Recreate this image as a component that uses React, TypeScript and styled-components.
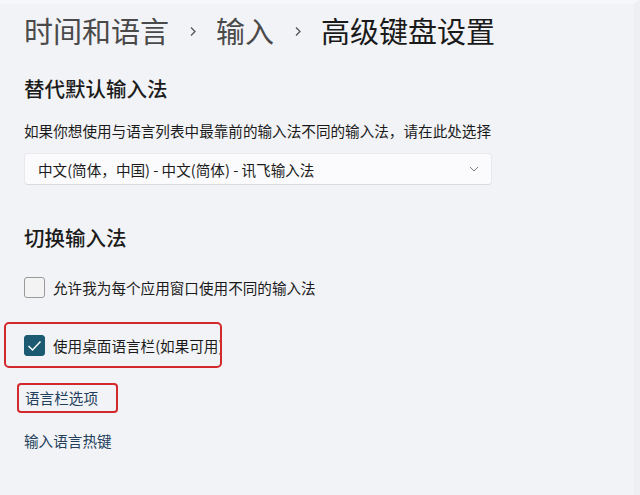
import React from "react";
import styled, { createGlobalStyle } from "styled-components";

const GlobalStyle = createGlobalStyle`
  html, body {
    margin: 0;
    padding: 0;
    background: #f2f3f6;
  }
  body {
    font-family: "Noto Sans CJK SC", "Noto Sans", sans-serif;
    color: #1b1b1b;
  }
  #root {
    min-height: 495px;
  }
`;

const Page = styled.div`
  box-sizing: border-box;
  width: 640px;
  height: 495px;
  padding: 13px 0 0 24px;
  background: #f2f3f6;
  border-top: 4px solid #f7f7f9;
  border-right: 6px solid #eeeff2;
  display: flex;
  flex-direction: column;
`;

const Breadcrumb = styled.h1`
  margin: -7px 0 0 0;
  display: flex;
  align-items: center;
  font-size: 29px;
  line-height: 40px;
  font-weight: 400;
  white-space: nowrap;
`;

const Crumb = styled.span<{ $current?: boolean }>`
  color: ${(p) => (p.$current ? "#1a1a1a" : "#4a4a4a")};
`;

const Sep = styled.span`
  display: inline-flex;
  align-items: center;
  margin: 2px 19px 0 20px;
  color: #5a5a5a;
`;

const SectionTitle = styled.h2<{ $top: number }>`
  margin: ${(p) => p.$top}px 0 0 0;
  font-size: 20.5px;
  line-height: 28px;
  font-weight: 500;
  color: #1b1b1b;
`;

const Description = styled.p`
  margin: 19px 0 0 0;
  font-size: 14.6px;
  line-height: 20px;
  color: #1b1b1b;
  white-space: nowrap;
`;

const Select = styled.div`
  box-sizing: border-box;
  margin-top: 12px;
  width: 468px;
  height: 32px;
  display: flex;
  align-items: center;
  justify-content: space-between;
  padding: 0 12px 0 13px;
  background: #fbfbfd;
  border: 1px solid #e8e9ec;
  border-bottom-color: #d9dadd;
  border-radius: 4px;
  font-size: 14.6px;
  color: #1b1b1b;
  white-space: nowrap;
`;

const CheckRow = styled.label<{ $top: number; $highlight?: boolean }>`
  box-sizing: border-box;
  margin-top: ${(p) => p.$top}px;
  display: flex;
  align-items: center;
  gap: 8px;
  font-size: 14.6px;
  line-height: 20px;
  color: #1b1b1b;
  white-space: nowrap;
  overflow: hidden;
  ${(p) =>
    p.$highlight
      ? `
    margin-left: -20px;
    width: 218px;
    height: 46px;
    padding: 1px 0 0 18px;
    border: 2.5px solid #d3292c;
    border-radius: 5px;
  `
      : ""}
`;

const Box = styled.span<{ $checked?: boolean }>`
  box-sizing: border-box;
  flex: none;
  width: 21px;
  height: 21px;
  border-radius: 3px;
  display: inline-flex;
  align-items: center;
  justify-content: center;
  background: ${(p) => (p.$checked ? "#1c5a72" : "#f3f3f4")};
  border: 1px solid ${(p) => (p.$checked ? "#1c5a72" : "#9a9a9a")};
`;

const Link = styled.a<{ $top: number; $highlight?: boolean }>`
  box-sizing: border-box;
  margin-top: ${(p) => p.$top}px;
  align-self: flex-start;
  display: flex;
  align-items: center;
  font-size: 14.6px;
  line-height: 20px;
  color: #243f5c;
  text-decoration: none;
  white-space: nowrap;
  ${(p) =>
    p.$highlight
      ? `
    margin-left: -7px;
    width: 101px;
    height: 30px;
    padding: 0 0 0 6px;
    border: 2.5px solid #d3292c;
    border-radius: 4px;
  `
      : ""}
`;

const Chevron = () => (
  <svg width="10" height="6" viewBox="0 0 10 6">
    <path d="M1 1 L5 5 L9 1" fill="none" stroke="#7a7a7a" strokeWidth="1" />
  </svg>
);

const SepIcon = () => (
  <svg width="8" height="11" viewBox="0 0 8 11">
    <path d="M2 1.5 L6 5.5 L2 9.5" fill="none" stroke="#555" strokeWidth="1.3" />
  </svg>
);

const CheckMark = () => (
  <svg width="15" height="12" viewBox="0 0 15 12">
    <path d="M1.5 6 L5.5 10 L13.5 1.5" fill="none" stroke="#ffffff" strokeWidth="1.4" />
  </svg>
);

export default function App() {
  return (
    <>
      <GlobalStyle />
      <Page>
        <Breadcrumb>
          <Crumb>时间和语言</Crumb>
          <Sep>
            <SepIcon />
          </Sep>
          <Crumb>输入</Crumb>
          <Sep>
            <SepIcon />
          </Sep>
          <Crumb $current>高级键盘设置</Crumb>
        </Breadcrumb>

        <SectionTitle $top={24}>替代默认输入法</SectionTitle>
        <Description>如果你想使用与语言列表中最靠前的输入法不同的输入法，请在此处选择</Description>
        <Select>
          <span>中文(简体，中国) - 中文(简体) - 讯飞输入法</span>
          <Chevron />
        </Select>

        <SectionTitle $top={38}>切换输入法</SectionTitle>
        <CheckRow $top={26}>
          <Box />
          <span>允许我为每个应用窗口使用不同的输入法</span>
        </CheckRow>
        <CheckRow $top={24} $highlight>
          <Box $checked>
            <CheckMark />
          </Box>
          <span>使用桌面语言栏(如果可用)</span>
        </CheckRow>

        <Link $top={15} $highlight href="#">
          语言栏选项
        </Link>
        <Link $top={18} href="#">
          输入语言热键
        </Link>
      </Page>
    </>
  );
}
